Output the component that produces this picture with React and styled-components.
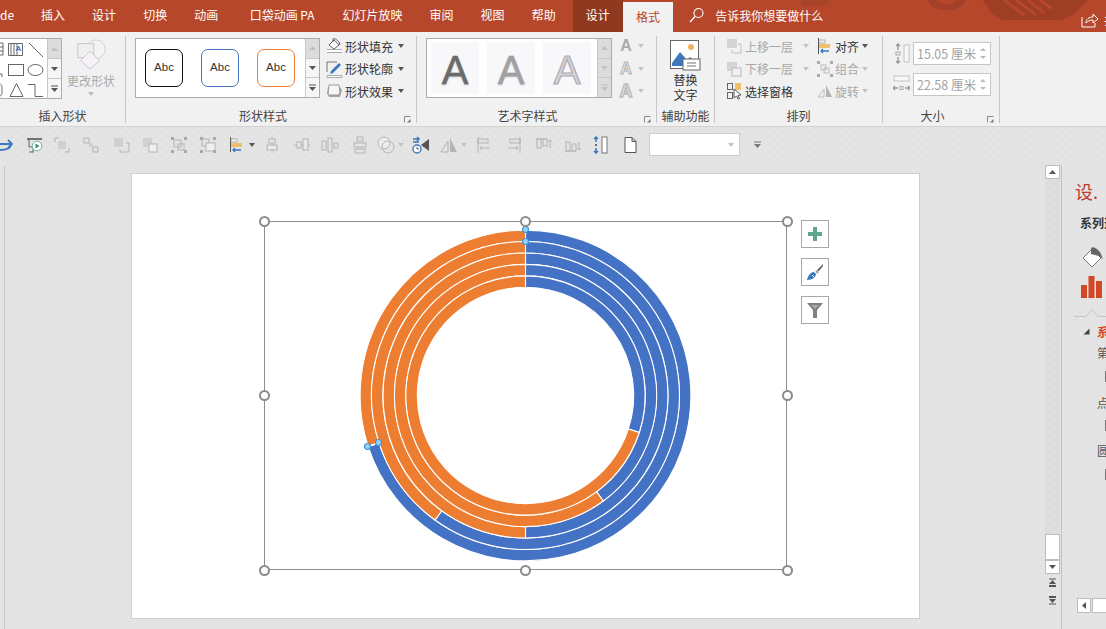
import React from "react";
import styled, { createGlobalStyle } from "styled-components";

const CJK = `"Noto Sans CJK SC", "Noto Sans", sans-serif`;
const dots = `radial-gradient(circle at 1px 1px, rgba(246,250,246,.42) .55px, transparent .9px), radial-gradient(circle at 5px 5px, rgba(246,250,246,.42) .55px, transparent .9px)`;

const Global = createGlobalStyle`
  html, body { margin: 0; padding: 0; width: 1106px; height: 629px; overflow: hidden; background: #e3e3e3; }
  body { font-family: ${CJK}; font-size: 12px; color: #444; }
  * { box-sizing: border-box; }
`;

const Page = styled.div`display:flex;flex-direction:column;width:1106px;height:629px;overflow:hidden;`;

/* ---------- title tabs ---------- */
const TabBar = styled.div`position:relative;display:flex;align-items:stretch;height:32px;background:#b7472a;color:#fff;overflow:hidden;flex:none;`;
const Tab = styled.div`
  display:flex;align-items:center;justify-content:center;white-space:nowrap;line-height:1;position:relative;
  padding:0 ${p=>p.$r ?? 13.5}px 2px ${p=>p.$l ?? 13.5}px;
`;
const ContextTab = styled(Tab)`background:#8f3920;width:50px;padding:0 0 2px;margin-left:3.5px;margin-right:.5px;`;
const ActiveTab = styled(Tab)`background:#f1f1f1;color:#b7472a;width:49.5px;padding:0;margin-top:2px;`;
const SearchBox = styled.div`display:flex;align-items:center;gap:11px;margin-left:16.5px;padding-bottom:2px;`;
const Decor = styled.svg`position:absolute;left:780px;top:0;`;
const ShareBox = styled.div`position:absolute;left:1081px;top:11px;display:flex;gap:6px;align-items:center;`;

/* ---------- ribbon ---------- */
const Ribbon = styled.div`display:flex;height:95px;background:#f1f1f1;border-bottom:1px solid #d2d2d2;flex:none;overflow:hidden;`;
const Group = styled.section`
  position:relative;display:flex;flex-direction:column;flex:none;width:${p=>p.$w}px;height:87px;margin-top:4px;
  border-right:1px solid #c6c6c6;
`;
const Body = styled.div`flex:1;display:flex;min-height:0;padding:${p=>p.$pad ?? "2px 0 0 9px"};`;
const CenterBody = styled(Body)`flex-direction:column;align-items:center;`;
const GroupLabel = styled.div`height:15px;line-height:15px;text-align:center;color:#444;white-space:nowrap;padding-right:${p=>p.$pr ?? 0}px;`;
const Launcher = styled.svg`position:absolute;right:${p=>p.$r ?? 5}px;bottom:0;`;

const Gallery = styled.div`display:flex;height:${p=>p.$h ?? 60}px;width:${p=>p.$w}px;flex:none;border:1px solid #ababab;background:#fff;${p=>p.$clip?"border-left:none;":""}`;
const GalleryStage = styled.div`flex:1;display:flex;align-items:center;gap:${p=>p.$gap}px;padding-left:${p=>p.$pl}px;min-width:0;overflow:hidden;`;
const ScrollCol = styled.div`display:flex;flex-direction:column;width:14px;flex:none;border-left:1px solid #c8c8c8;background:#f1f1f1;`;
const ScrollCell = styled.div`flex:1;display:flex;align-items:center;justify-content:center;background:${p=>p.$off?"#dcdcdc":"#f6f6f6"};& + &{border-top:1px solid #c8c8c8;}`;
const AbcBox = styled.div`width:38px;height:38px;border-radius:7px;background:#fff;border:1.4px solid ${p=>p.$c};display:flex;align-items:center;justify-content:center;font:11.5px "Liberation Sans",Arial,sans-serif;color:#333;padding-bottom:2px;`;

const BigCmd = styled.div`display:flex;flex-direction:column;align-items:center;width:${p=>p.$w ?? "52px"};margin-left:${p=>p.$ml ?? 3}px;color:${p=>p.$off?"#aaa":"#333"};line-height:15px;`;
const BigCmdText = styled.span`margin-top:${p=>p.$mt ?? 0}px;`;
const Stack = styled.div`display:flex;flex-direction:column;margin-left:${p=>p.$ml ?? 0}px;width:${p=>p.$w ? `${p.$w}px` : "auto"};margin-top:-3px;flex:none;`;
const CmdRow = styled.div`display:flex;align-items:center;height:22.5px;gap:${p=>p.$gap ?? 3}px;color:${p=>p.$off?"#a8a8a8":"#333"};white-space:nowrap;`;
const Caret = styled.i`display:inline-block;width:0;height:0;border:3.5px solid transparent;border-bottom:none;border-top:4px solid ${p=>p.$c ?? "#555"};margin-left:${p=>p.$ml ?? 0}px;margin-top:${p=>p.$mt ?? 0}px;flex:none;`;

const WordTile = styled.div`
  width:48px;height:52px;background:#f8f8fa;display:flex;align-items:center;justify-content:center;
  font:400 40px/1 "Liberation Sans",Arial,sans-serif;padding-top:3px;
  color:${p=>p.$c};-webkit-text-stroke:${p=>p.$s};text-shadow:${p=>p.$sh};
`;
const SmallA = styled.span`font:700 ${p=>p.$size ?? 16}px/1 "Liberation Sans",Arial,sans-serif;color:${p=>p.$c ?? "#aaa"};width:16px;text-align:center;-webkit-text-stroke:${p=>p.$s ?? "0"};`;

const SizeCol = styled.div`display:flex;flex-direction:column;gap:8px;padding-top:4px;`;
const SizeRow = styled.div`display:flex;align-items:center;gap:3px;`;
const SizeInput = styled.div`width:78px;height:23px;background:#fff;border:1px solid #c6c6c6;display:flex;align-items:center;justify-content:space-between;padding:0 4px 0 3px;color:#a2a2a2;font-size:12.5px;white-space:nowrap;`;
const Spin = styled.div`display:flex;flex-direction:column;gap:5px;`;
const SpinArrow = styled.i`display:block;width:0;height:0;border:3px solid transparent;${p=>p.$up?"border-top:none;border-bottom:3px solid #bbb;":"border-bottom:none;border-top:3px solid #bbb;"}`;

/* ---------- quick bar ---------- */
const QuickBar = styled.div`display:flex;align-items:center;height:38px;flex:none;background:#e3e3e3;background-image:${dots};background-size:9px 8px;padding-bottom:3px;margin-left:-10px;`;
const ToolSlot = styled.div`display:flex;align-items:center;justify-content:center;width:${p=>p.$w}px;flex:none;`;
const Combo = styled.div`width:91px;height:23px;margin-left:8px;background:#fff;border:1px solid #cdcdcd;display:flex;align-items:center;justify-content:flex-end;padding-right:5px;flex:none;`;

/* ---------- workspace ---------- */
const Workspace = styled.div`flex:1;display:flex;min-height:0;background:#e3e3e3;background-image:${dots};background-size:9px 8px;`;
const Canvas = styled.div`width:1041px;margin-left:4px;border-left:1px solid #c9c9c9;padding:9px 0 0 127px;flex:none;`;
const Slide = styled.div`width:787px;height:444px;background:#fff;box-shadow:0 0 0 1px #cfcfcf;padding:47px 0 0 132px;`;
const ChartRow = styled.div`display:flex;gap:14px;align-items:flex-start;`;
const ChartFrame = styled.div`position:relative;width:523px;height:349px;border:1px solid #8e8e8e;display:flex;align-items:center;justify-content:center;`;
const HandleLayer = styled.div`position:absolute;inset:-1px;pointer-events:none;`;
const Handle = styled.i`position:absolute;width:11px;height:11px;border-radius:50%;background:#fff;border:2px solid #8b8b8b;left:calc(${p=>p.$x}% - 5.5px);top:calc(${p=>p.$y}% - 5.5px);`;
const ChartTools = styled.div`display:flex;flex-direction:column;gap:10px;margin-top:-1px;`;
const ChartTool = styled.div`width:28px;height:28px;background:#fff;border:1px solid #a8a8a8;display:flex;align-items:center;justify-content:center;`;

const VScroll = styled.div`width:17px;flex:none;display:flex;flex-direction:column;border-right:1px solid #c2c2c2;padding-right:1px;`;
const VButton = styled.div`height:${p=>p.$h ?? 14}px;background:#fff;border:1px solid #bdbdbd;display:flex;align-items:center;justify-content:center;flex:none;`;
const VTrack = styled.div`flex:1;background:#dcdcdc;background-image:${dots};background-size:9px 8px;`;
const VExtra = styled.div`height:55px;flex:none;display:flex;flex-direction:column;align-items:center;gap:7px;padding-top:4px;`;

const Pane = styled.aside`flex:1;min-width:0;overflow:hidden;white-space:nowrap;display:flex;flex-direction:column;position:relative;`;
const PaneTitle = styled.div`color:#c0392b;font-size:18px;line-height:24px;margin:14px 0 0 13px;`;
const SeriesLabel = styled.div`font-weight:700;color:#333;line-height:16px;margin:12px 0 0 18px;`;
const PaneIcons = styled.div`display:flex;flex-direction:column;gap:7px;margin:14px 0 0 19px;`;
const PaneRule = styled.svg`margin:10px 0 0 12px;display:block;flex:none;`;
const SectionHead = styled.div`display:flex;align-items:center;color:#d24726;font-weight:700;height:16px;margin:6px 0 0 21px;gap:7px;`;
const PaneLine = styled.div`line-height:16px;margin:${p=>p.$mt}px 0 0 35px;color:#555;`;
const PaneBox = styled.i`display:block;flex:none;width:2px;height:11px;border-left:1px solid #777;margin:${p=>p.$mt}px 0 0 43px;`;
const HScroll = styled.div`position:absolute;left:15px;top:433px;display:flex;gap:1px;`;
const HBtn = styled.div`width:${p=>p.$w}px;height:15px;background:#fff;border:1px solid #bdbdbd;display:flex;align-items:center;justify-content:center;flex:none;`;

/* ---------- drawings ---------- */
const G = ({ w = 18, h = 18, vb, children }) => (
  <svg width={w} height={h} viewBox={vb || `0 0 ${w} ${h}`} fill="none" style={{ display: "block", flex: "none" }}>{children}</svg>
);
const gray = "#b4b4b4";
const Hatch = ({ x, y, s = 9 }) => <rect x={x} y={y} width={s} height={s} fill="#d0d0d0" />;

const tb = [
  { w: 30, i: <><path d="M4 8h11M12 4l4 4-4 4M15 9c-1 4-6 5-12 5" stroke="#3b78bd" strokeWidth="1.8" /></> },
  { w: 30, i: <><path d="M1 3h15" stroke="#555" strokeWidth="1.6" /><path d="M3 3v8h4M8 16H3" stroke="#666" /><path d="M7 12v4" stroke="#666" /><circle cx="11" cy="10" r="4.8" fill="#fff" stroke="#6b9" /><path d="M9.500 7.500l4 2.500-4 2.500z" fill="#2f8f74" /></> },
  { w: 24, i: <><path d="M2 6V2h4M16 12v4h-4" stroke={gray} /><Hatch x={5} y={5} s={8} /></> },
  { w: 34, i: <><rect x="2" y="2" width="5" height="5" stroke={gray} /><rect x="11" y="11" width="5" height="5" stroke={gray} /><Hatch x={7} y={7} s={4} /></> },
  { w: 26, i: <><Hatch x={2} y={2} s={9} /><path d="M14 7h3v9H8v-3" stroke={gray} /></> },
  { w: 32, i: <><Hatch x={2} y={2} s={9} /><rect x="8" y="8" width="8" height="8" fill="#f0f0f0" stroke={gray} /></> },
  { w: 26, i: <><rect x="4" y="4" width="7" height="7" stroke={gray} /><rect x="8" y="8" width="6" height="6" stroke={gray} /><path d="M1 1h3v3H1zM14 1h3v3h-3zM1 14h3v3H1zM14 14h3v3h-3z" fill="#a8a8a8" /></> },
  { w: 32, i: <><rect x="3" y="3" width="7" height="7" stroke={gray} /><rect x="7" y="7" width="9" height="8" fill="#efefef" stroke={gray} /><path d="M1 1h3v3H1zM14 1h3v3h-3zM1 14h3v3H1zM14 14h3v3h-3z" fill="#a8a8a8" /></> },
  { w: 34, c: 1, i: <><path d="M2.500 1v15" stroke="#555" /><rect x="3" y="3" width="6" height="3" fill="#f4f4f4" stroke="#888" strokeWidth=".6" /><rect x="3" y="7" width="11" height="4" fill="#f0bf6e" /><path d="M13 14H5m2-2l-2 2 2 2" stroke="#3b78bd" strokeWidth="1.3" /></> },
  { w: 27, i: <><path d="M9 1v16" stroke={gray} /><rect x="6" y="3" width="6" height="4" fill="#e8e8e8" stroke={gray} /><rect x="4" y="9" width="10" height="5" fill="#e8e8e8" stroke={gray} /></> },
  { w: 33, i: <><path d="M1 9h16" stroke={gray} /><rect x="4" y="6" width="4" height="6" fill="#e8e8e8" stroke={gray} /><rect x="10" y="3" width="5" height="11" fill="#e8e8e8" stroke={gray} /></> },
  { w: 23, i: <><rect x="1" y="5" width="4" height="9" stroke={gray} /><rect x="7" y="2" width="4" height="14" stroke={gray} /><rect x="13" y="7" width="4" height="5" stroke={gray} /></> },
  { w: 38, i: <><rect x="6" y="1" width="6" height="4" stroke={gray} /><rect x="3" y="7" width="12" height="4" stroke={gray} /><rect x="4" y="13" width="10" height="4" stroke={gray} /></> },
  { w: 22, c: 1, cc: "#c4c4c4", i: <><circle cx="7" cy="7" r="6" stroke={gray} fill="#ececec" /><circle cx="11" cy="11" r="6" stroke={gray} /></> },
  { w: 40, i: <><path d="M1 3h6m-2-2l2 2-2 2M1 6h6" stroke="#3b78bd" strokeWidth="1.5" /><circle cx="5" cy="13" r="4" fill="#fff" stroke="#3b78bd" strokeWidth="1.4" /><path d="M5 11v2h2" stroke="#555" /><path d="M17 3v12L9 9z" fill="#555" /></> },
  { w: 24, c: 1, cc: "#c4c4c4", i: <><path d="M8 5v11H1z" stroke={gray} /><path d="M10 2v14h7z" fill="#b4b4b4" /></> },
  { w: 38, i: <><path d="M3 1v16" stroke={gray} /><rect x="3" y="3" width="10" height="4" stroke={gray} /><path d="M15 12H5m2-2l-2 2 2 2" stroke={gray} /></> },
  { w: 22, i: <><path d="M15 1v16" stroke={gray} /><rect x="5" y="3" width="10" height="4" stroke={gray} /><path d="M3 12h10m-2-2l2 2-2 2" stroke={gray} /></> },
  { w: 37, i: <><path d="M1 3h11" stroke={gray} /><rect x="2" y="3" width="4" height="9" stroke={gray} /><rect x="8" y="3" width="4" height="7" stroke={gray} /><path d="M15 12V4m-2 2l2-2 2 2" stroke={gray} /></> },
  { w: 22, i: <><path d="M1 15h11" stroke={gray} /><rect x="2" y="6" width="4" height="9" stroke={gray} /><rect x="8" y="8" width="4" height="7" stroke={gray} /><path d="M15 6v8m-2-2l2 2 2-2" stroke={gray} /></> },
  { w: 34, i: <><path d="M4 6V1M2 3l2-2 2 2M4 12v5M2 15l2 2 2-2" stroke="#3b78bd" strokeWidth="1.5" /><path d="M3 8h2v2H3z" fill="#666" /><rect x="10" y="1" width="5" height="16" fill="#fff" stroke="#777" /></> },
  { w: 23, i: <path d="M4 1.500h7l4 4v11H4zM11 1.500v4h4" fill="#fff" stroke="#555" /> },
];

const Arrow = ({ dir = "down", c = "#666" }) => (
  <G w={9} h={6}><path d={dir === "up" ? "M4.500 1L8 5H1z" : "M1 1h7L4.500 5z"} fill={c} /></G>
);
const More = ({ c = "#666" }) => (
  <G w={9} h={8}><path d="M1 1h7" stroke={c} /><path d="M1 3h7L4.500 7z" fill={c} /></G>
);
const GalleryScroll = ({ ghost }) => (
  <ScrollCol>
    <ScrollCell $off><Arrow dir="up" c="#c0c0c0" /></ScrollCell>
    <ScrollCell $off={ghost}><Arrow c={ghost ? "#c0c0c0" : "#555"} /></ScrollCell>
    <ScrollCell $off={ghost}><More c={ghost ? "#c0c0c0" : "#555"} /></ScrollCell>
  </ScrollCol>
);
const Corner = ({ r }) => (
  <Launcher $r={r} width="7" height="7"><path d="M.5 .5h6M.5 .5v6" stroke="#888" /><path d="M6.500 3v3.500H3z" fill="#777" /></Launcher>
);

const ShapesArt = () => (
  <G w={48} h={59}>
    <g stroke="#666" fill="none">
      <path d="M-1 4h4v12h-4M-1 8h4M-1 12h4" /><path d="M8.500 4.500h14v12h-14zM11 4.500v12M14 4.500v12M17 4.500v12" />
      <path d="M29 4l14 14" />
      <path d="M-1 35h3v3" /><rect x="8.500" y="25.500" width="15" height="11" />
      <ellipse cx="35.500" cy="31" rx="7.500" ry="5.500" />
      <path d="M-1 45c3 0 3 2 3 6s0 6-3 6" /><path d="M10 57.500l6.500-13 6.500 13z" />
      <path d="M28 45.500h7v12h8" />
    </g>
    <text x="15.500" y="12" fontSize="8" fontWeight="700" fill="#3b78bd" fontFamily="Liberation Sans">A</text>
  </G>
);

const ChangeIcon = () => (
  <G w={32} h={32} vb="0 0 32 34">
    <circle cx="21" cy="12" r="10" fill="#f4f4f4" stroke="#cfcfcf" />
    <rect x="2" y="6" width="17" height="15" fill="#f0f0f0" stroke="#c4c4c4" />
    <path d="M15 14l10 10-10 9-10-9z" fill="#f7f2f8" stroke="#cdbdd2" />
  </G>
);
const FillIcon = () => (
  <G w={17} h={18}>
    <path d="M3 8l5-5 5 5-5 4z" fill="#fff" stroke="#666" /><path d="M7 5V2c2-1 4 1 6 3l1 3" stroke="#555" />
    <path d="M1 12.500h15M1 15.500h15" stroke="#aaa" /><path d="M1 13h15v2H1z" fill="#fff" />
  </G>
);
const LineIcon = () => (
  <G w={17} h={18}>
    <path d="M1 12V2h10" stroke="#777" /><path d="M5 11l8-8 2 2-8 8-3 1z" fill="#3b78bd" />
    <path d="M1 15.500h15v2H1z" fill="#fff" stroke="#aaa" />
  </G>
);
const EffectIcon = () => (
  <G w={17} h={18}>
    <path d="M2 5h12l2 3-2 7H3l-2-4z" fill="#a6a6a6" /><path d="M3 3h10l1 8-2 2H2z" fill="#f6f6f6" stroke="#999" />
  </G>
);
const AltIcon = () => (
  <G w={31} h={31}>
    <rect x=".5" y=".5" width="28" height="28" fill="#fff" stroke="#666" />
    <circle cx="21" cy="7" r="3" fill="#f0b45b" />
    <path d="M2 23l8-11 7 8 3-3 6 6v3H2z" fill="#3f78bd" />
    <rect x="13" y="19" width="17" height="11" fill="#fff" stroke="#666" />
    <path d="M17 23h9M17 26h9" stroke="#777" />
  </G>
);
const LayerUp = () => (<G w={16} h={16}><rect x="1" y="1" width="10" height="9" fill="#d4d4d4" /><path d="M12 6h3v9H6v-3" stroke="#c0c0c0" /></G>);
const LayerDown = () => (<G w={16} h={16}><rect x="1" y="1" width="10" height="9" fill="#d4d4d4" /><rect x="6" y="7" width="9" height="8" fill="#f1f1f1" stroke="#b8b8b8" /></G>);
const PaneIcon = () => (
  <G w={16} h={18}>
    <rect x="1.500" y="1.500" width="5" height="6" stroke="#666" /><rect x="1.500" y="10.500" width="5" height="6" stroke="#666" />
    <rect x="9" y="1" width="6" height="7" fill="#f0bf6e" />
    <path d="M8 7l7 6-3 .5 1.500 3-1.500 .5-1.500-3L8 16z" fill="#fff" stroke="#555" />
  </G>
);
const AlignIcon = () => (
  <G w={16} h={18}>
    <path d="M1.500 1v16" stroke="#555" /><rect x="2" y="3" width="6" height="3" fill="#f4f4f4" stroke="#888" strokeWidth=".6" />
    <rect x="2" y="7" width="11" height="4" fill="#f0bf6e" /><path d="M12 14H4m2-2l-2 2 2 2" stroke="#3b78bd" strokeWidth="1.3" />
  </G>
);
const GroupIcon = () => (
  <G w={16} h={16}>
    <rect x="4" y="4" width="5" height="5" stroke="#bbb" /><rect x="7" y="7" width="5" height="5" stroke="#bbb" />
    <path d="M0 0h3v3H0zM13 0h3v3h-3zM0 13h3v3H0zM13 13h3v3h-3z" fill="#aaa" />
  </G>
);
const RotateIcon = () => (<G w={16} h={16}><path d="M7 6v8H1z" stroke="#bbb" /><path d="M9 2v12h6z" fill="#b4b4b4" /></G>);
const HeightIcon = () => (
  <G w={17} h={21}>
    <rect x="11" y="2" width="5" height="17" stroke="#c4c4c4" fill="#f7f7f7" />
    <path d="M5 7V1M3 3l2-2 2 2M5 14v6M3 18l2 2 2-2" stroke="#999" strokeWidth="1.4" /><rect x="3" y="9" width="4" height="3" stroke="#aaa" />
  </G>
);
const WidthIcon = () => (
  <G w={17} h={21}>
    <rect x="1" y="2" width="15" height="5" stroke="#c4c4c4" fill="#f7f7f7" />
    <path d="M5 14H0M2 12l-2 2 2 2M12 14h5M15 12l2 2-2 2" stroke="#999" strokeWidth="1.3" /><rect x="7" y="12.500" width="3" height="3" stroke="#aaa" />
  </G>
);

const RINGS = [252, 216, 180, 143.6, 108];
const C = 166.5;
const pt = (r, d) => {
  const a = ((d - 90) * Math.PI) / 180;
  return [C + r * Math.cos(a), C + r * Math.sin(a)];
};
const sector = (ro, ri, a, b) => {
  const large = b - a > 180 ? 1 : 0;
  const [x1, y1] = pt(ro, a), [x2, y2] = pt(ro, b), [x3, y3] = pt(ri, b), [x4, y4] = pt(ri, a);
  return `M${x1} ${y1}A${ro} ${ro} 0 ${large} 1 ${x2} ${y2}L${x3} ${y3}A${ri} ${ri} 0 ${large} 0 ${x4} ${y4}Z`;
};
const Point = ({ x, y }) => <circle cx={x} cy={y} r="3" fill="#9bd3f5" stroke="#3a96dc" strokeWidth="1.2" />;
const Rings = () => (
  <svg width="334" height="334" viewBox="0 0 334 334" style={{ overflow: "visible", flex: "none" }}>
    {RINGS.map((deg, i) => {
      const ro = 165.4 - i * 11.44, ri = ro - 11.44;
      return (
        <g key={deg} stroke="#fff" strokeWidth="1.1">
          <path d={sector(ro, ri, 0, deg)} fill="#4472c4" />
          <path d={sector(ro, ri, deg, 359.999)} fill="#ed7d31" />
        </g>
      );
    })}
    <path d="M8.500 217.500l11-4" stroke="#fff" strokeWidth="1.2" />
    <Point x={C} y={0.5} /><Point x={C} y={12.5} />
    <Point x={8.5} y={217.5} /><Point x={19.5} y={213.5} />
  </svg>
);

const handles = [[0,0],[50,0],[100,0],[0,50],[100,50],[0,100],[50,100],[100,100]];

const tabs = [
  ["de", { $l: 0 }], ["插入"], ["设计"], ["切换"], ["动画"],
  ["口袋动画 PA", { $l: 18, $r: 14.5 }], ["幻灯片放映"], ["审阅"], ["视图"], ["帮助"],
];

export default function App() {
  return (
    <Page>
      <Global />
      <TabBar>
        <Decor width="326" height="32" viewBox="0 0 326 32">
          <path d="M20 0h30l-3 6H22z" fill="#a9442a" />
          <path d="M148 0a18 10 0 0 0 37 0h-9a9 4 0 0 1-19 0z" fill="#a3402a" />
          <path d="M203 0h105l-14 14-12 6h-60l-10-6z" fill="#9d3e25" />
          <path d="M224 0l20 15M236 0l20 15M248 0l16 13M260 0l12 9" stroke="#b7472a" strokeWidth="3" />
        </Decor>
        {tabs.map(([t, p]) => <Tab key={t + (p?.$l ?? "")} {...p}>{t}</Tab>)}
        <ContextTab>设计</ContextTab>
        <ActiveTab>格式</ActiveTab>
        <SearchBox>
          <G w={15} h={16}><circle cx="9.500" cy="6" r="4.500" stroke="#fff" strokeWidth="1.1" /><path d="M6 9.500L1 15" stroke="#fff" strokeWidth="1.3" /></G>
          <span>告诉我你想要做什么</span>
        </SearchBox>
        <ShareBox>
          <G w={17} h={16}><path d="M1 5v10h13v-4" stroke="#fff" /><path d="M5 11c0-4 3-6 7-6V2l5 5-5 4V8c-3 0-5 1-7 3z" fill="#b7472a" stroke="#fff" /></G>
          <span>共</span>
        </ShareBox>
      </TabBar>

      <Ribbon>
        <Group $w={126}>
          <Body $pad="2px 0 0 0">
            <Gallery $w={62} $h={61} $clip>
              <GalleryStage $pl={0} $gap={0}><ShapesArt /></GalleryStage>
              <GalleryScroll />
            </Gallery>
            <BigCmd $off>
              <ChangeIcon />
              <BigCmdText $mt={3}>更改形状</BigCmdText>
              <Caret $c="#bdbdbd" $mt={4} />
            </BigCmd>
          </Body>
          <GroupLabel>插入形状</GroupLabel>
        </Group>

        <Group $w={291}>
          <Body>
            <Gallery $w={185}>
              <GalleryStage $pl={9} $gap={18}>
                <AbcBox $c="#111">Abc</AbcBox>
                <AbcBox $c="#4472c4">Abc</AbcBox>
                <AbcBox $c="#ed7d31">Abc</AbcBox>
              </GalleryStage>
              <GalleryScroll />
            </Gallery>
            <Stack $ml={6}>
              <CmdRow $gap={2}><FillIcon />形状填充<Caret $ml={3} /></CmdRow>
              <CmdRow $gap={2}><LineIcon />形状轮廓<Caret $ml={3} /></CmdRow>
              <CmdRow $gap={2}><EffectIcon />形状效果<Caret $ml={3} /></CmdRow>
            </Stack>
          </Body>
          <GroupLabel $pr={16}>形状样式</GroupLabel>
          <Corner />
        </Group>

        <Group $w={240}>
          <Body>
            <Gallery $w={186}>
              <GalleryStage $pl={4} $gap={8}>
                <WordTile $c="#6c6c6c" $s=".4px #666" $sh="0 1px 2px rgba(0,0,0,.3)">A</WordTile>
                <WordTile $c="#a2a2a2" $s=".4px #9a8fa0" $sh="0 1px 2px rgba(0,0,0,.25)">A</WordTile>
                <WordTile $c="#d4d4d6" $s="1.2px #b2a9b6">A</WordTile>
              </GalleryStage>
              <GalleryScroll ghost />
            </Gallery>
            <Stack $ml={6}>
              <CmdRow $gap={0}><SmallA $c="#aaa">A</SmallA><Caret $c="#c4c4c4" $ml={4} /></CmdRow>
              <CmdRow $gap={0}><SmallA $c="#f4f4f4" $s="1px #b0b0b0">A</SmallA><Caret $c="#c4c4c4" $ml={4} /></CmdRow>
              <CmdRow $gap={0}><SmallA $c="#eee" $s="1.4px #bbb" $size={18}>A</SmallA><Caret $c="#c4c4c4" $ml={4} /></CmdRow>
            </Stack>
          </Body>
          <GroupLabel $pr={18}>艺术字样式</GroupLabel>
          <Corner />
        </Group>

        <Group $w={58}>
          <CenterBody $pad="4px 0 0 0">
            <AltIcon />
            <BigCmd $ml={0} $w="auto"><BigCmdText $mt={1}>替换</BigCmdText><BigCmdText>文字</BigCmdText></BigCmd>
          </CenterBody>
          <GroupLabel>辅助功能</GroupLabel>
        </Group>

        <Group $w={168}>
          <Body $pad="2px 0 0 11px">
            <Stack $w={91}>
              <CmdRow $off $gap={3}><LayerUp />上移一层<Caret $c="#c4c4c4" $ml={7} /></CmdRow>
              <CmdRow $off $gap={3}><LayerDown />下移一层<Caret $c="#c4c4c4" $ml={7} /></CmdRow>
              <CmdRow $gap={3}><PaneIcon />选择窗格</CmdRow>
            </Stack>
            <Stack>
              <CmdRow $gap={2}><AlignIcon />对齐<Caret $ml={1} /></CmdRow>
              <CmdRow $off $gap={2}><GroupIcon />组合<Caret $c="#c4c4c4" $ml={1} /></CmdRow>
              <CmdRow $off $gap={2}><RotateIcon />旋转<Caret $c="#c4c4c4" $ml={1} /></CmdRow>
            </Stack>
          </Body>
          <GroupLabel>排列</GroupLabel>
        </Group>

        <Group $w={117}>
          <Body $pad="2px 0 0 10px">
            <SizeCol>
              <SizeRow><HeightIcon /><SizeInput>15.05 厘米<Spin><SpinArrow $up /><SpinArrow /></Spin></SizeInput></SizeRow>
              <SizeRow><WidthIcon /><SizeInput>22.58 厘米<Spin><SpinArrow $up /><SpinArrow /></Spin></SizeInput></SizeRow>
            </SizeCol>
          </Body>
          <GroupLabel $pr={17}>大小</GroupLabel>
          <Corner />
        </Group>
      </Ribbon>

      <QuickBar>
        {tb.map((t, i) => (
          <ToolSlot key={i} $w={t.w}>
            <G>{t.i}</G>
            {t.c ? <Caret $c={t.cc ?? "#555"} $ml={3} /> : null}
          </ToolSlot>
        ))}
        <Combo><Caret $c="#c4c4c4" /></Combo>
        <ToolSlot $w={34}><More c="#777" /></ToolSlot>
      </QuickBar>

      <Workspace>
        <Canvas>
          <Slide>
            <ChartRow>
              <ChartFrame>
                <Rings />
                <HandleLayer>
                  {handles.map(([x, y]) => <Handle key={`${x}-${y}`} $x={x} $y={y} />)}
                </HandleLayer>
              </ChartFrame>
              <ChartTools>
                <ChartTool>
                  <G w={16} h={16}><path d="M6 1h4v5h5v4h-5v5H6v-5H1V6h5z" fill="#5fa68a" /></G>
                </ChartTool>
                <ChartTool>
                  <G w={18} h={18}><path d="M17 1l-6 6 1.500 1.500L17 3z" fill="#666" /><path d="M10 8l2 2" stroke="#999" strokeWidth="2" /><path d="M1 17c1-5 4-8 7-8l2 2c0 3-4 6-9 6z" fill="#3b78bd" /><path d="M6 12l2 2" stroke="#fff" /></G>
                </ChartTool>
                <ChartTool>
                  <G w={18} h={18}><path d="M1 2h16l-6 7v8H7V9z" fill="#7f7f7f" /><path d="M5 4h8l-4 4z" fill="#a9a9a9" /></G>
                </ChartTool>
              </ChartTools>
            </ChartRow>
          </Slide>
        </Canvas>

        <VScroll>
          <VButton><Arrow dir="up" c="#555" /></VButton>
          <VTrack />
          <VButton $h={26} />
          <VButton><Arrow c="#555" /></VButton>
          <VExtra>
            <G w={9} h={10}><path d="M1 1h7" stroke="#555" /><path d="M4.500 2L8 6H1zM1 7h7v2H1z" fill="#555" /></G>
            <G w={9} h={10}><path d="M1 1h7v2H1zM1 4h7L4.500 8z" fill="#555" /><path d="M1 9h7" stroke="#555" /></G>
          </VExtra>
        </VScroll>

        <Pane>
          <PaneTitle>设.</PaneTitle>
          <SeriesLabel>系列选项</SeriesLabel>
          <PaneIcons>
            <G w={24} h={24}><path d="M2 13l9-9 9 9-9 9z" fill="#fff" stroke="#777" /><path d="M10 9V3c3-2 6 1 9 4l3 7-4-3z" fill="#666" /></G>
            <G w={21} h={22}><path d="M0 9h6v13H0zM7.500 0h6v22h-6zM15 5h6v17h-6z" fill="#d24726" /></G>
          </PaneIcons>
          <PaneRule width="50" height="9" fill="none"><path d="M0 8.500h12l6-7 6 7h26" stroke="#c4c4c4" /></PaneRule>
          <SectionHead>
            <G w={7} h={7}><path d="M6.500 .5v6h-6z" fill="#444" /></G>
            <span>系列选项</span>
          </SectionHead>
          <PaneLine $mt={6}>第一扇区起始角度</PaneLine>
          <PaneBox $mt={10} />
          <PaneLine $mt={13}>点爆炸型</PaneLine>
          <PaneBox $mt={9} />
          <PaneLine $mt={12}>圆环图内径大小</PaneLine>
          <PaneBox $mt={10} />
          <HScroll>
            <HBtn $w={14}><G w={6} h={9}><path d="M5 1v7L1 4.500z" fill="#555" /></G></HBtn>
            <HBtn $w={40} />
          </HScroll>
        </Pane>
      </Workspace>
    </Page>
  );
}
